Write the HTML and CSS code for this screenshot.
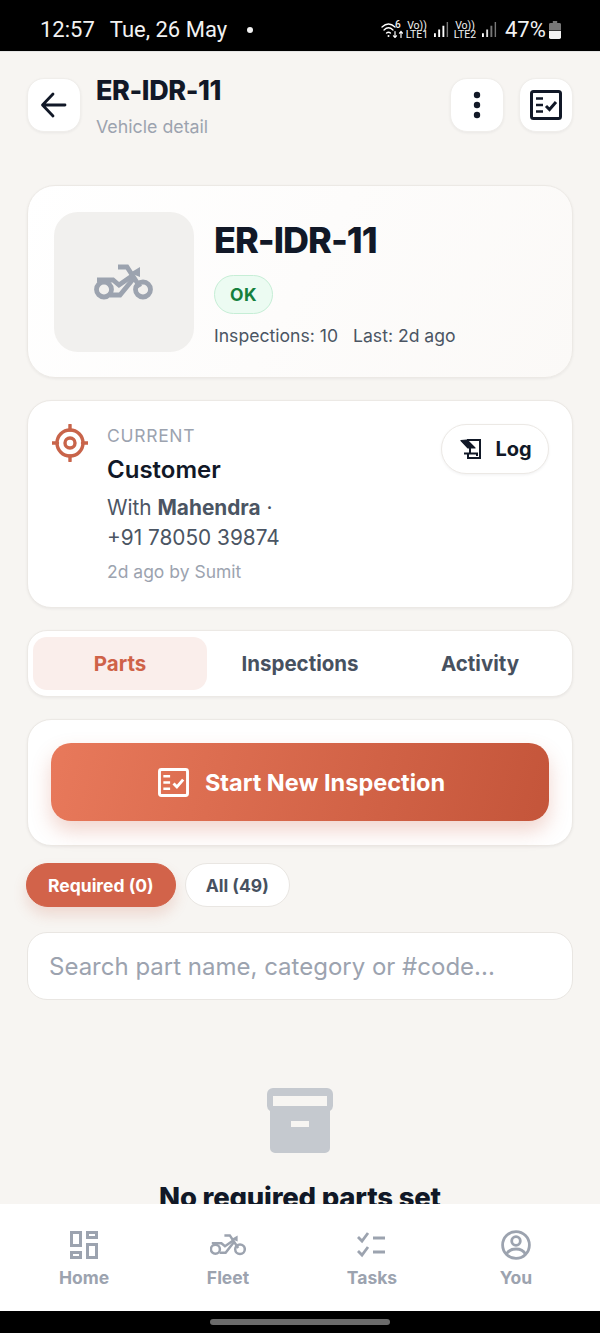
FILE: index.html
```html
<!DOCTYPE html>
<html lang="en">
<head>
<meta charset="utf-8">
<title>ER-IDR-11</title>
<link rel="stylesheet" href="styles.css">
</head>
<body>
<div class="phone">
  <div class="statusbar">
    <div class="status-left"><span class="clock">12:57</span><span class="date">Tue, 26 May</span><span class="dot"></span></div>
    <div class="status-right">
      <div class="wifi-box">
        <svg width="22" height="16" viewBox="0 0 22 16" fill="none" stroke="#fff" stroke-linecap="round">
          <path d="M1 5Q7.500 -1 14 5" stroke-width="1.300"/><path d="M3 8Q7.500 3.500 12 8" stroke-width="1.300"/><path d="M5.500 11Q7.500 9.500 9.500 11" stroke-width="1.300"/>
          <circle cx="7.500" cy="14" r="1" fill="#fff" stroke="none"/>
          <path d="M14 9.500v6M12.500 13.800l1.500 1.700 1.500-1.700M20 15.500v-6M18.500 11.200l1.500-1.700 1.500 1.700" stroke-width="1.200"/>
        </svg>
        <span class="wifi-six">6</span>
      </div>
      <div class="lte"><span>Vo))</span><span>LTE1</span></div>
      <svg class="signal" width="15" height="15" viewBox="0 0 16 16"><rect x="0" y="12" width="2" height="4" fill="#fff"/><rect x="4.500" y="8" width="2" height="8" fill="#fff"/><rect x="9" y="4" width="2" height="12" fill="#fff"/><rect x="13.500" y="0" width="1.500" height="16" fill="#777"/></svg>
      <div class="lte"><span>Vo))</span><span>LTE2</span></div>
      <svg class="signal" width="15" height="15" viewBox="0 0 16 16"><rect x="0" y="12" width="2" height="4" fill="#fff"/><rect x="4.500" y="8" width="2" height="8" fill="#ddd"/><rect x="9" y="4" width="2" height="12" fill="#777"/><rect x="13.500" y="0" width="1.500" height="16" fill="#777"/></svg>
      <span class="battery-text">47%</span>
      <svg width="12" height="18" viewBox="0 0 11 19" preserveAspectRatio="none"><path d="M3.500 0h4v2h2a1.500 1.500 0 0 1 1.500 1.500V10H0V3.500A1.500 1.500 0 0 1 1.500 2h2z" fill="#777"/><path d="M0 10.500h11v7A1.500 1.500 0 0 1 9.500 19h-8A1.500 1.500 0 0 1 0 17.500z" fill="#f2f2f2"/></svg>
    </div>
  </div>

  <main class="content">
    <header class="topbar">
      <button class="icon-btn">
        <svg width="30" height="30" viewBox="0 0 30 30" fill="none" stroke="#111827" stroke-width="2.800" stroke-linecap="round" stroke-linejoin="round"><path d="M26 15H4M14 4 3.500 15 14 26"/></svg>
      </button>
      <div class="topbar-titles">
        <div class="topbar-title">ER-IDR-11</div>
        <div class="topbar-sub">Vehicle detail</div>
      </div>
      <button class="icon-btn">
        <svg width="8" height="28" viewBox="0 0 8 28" fill="#111827"><circle cx="4" cy="4" r="3.200"/><circle cx="4" cy="14" r="3.200"/><circle cx="4" cy="24" r="3.200"/></svg>
      </button>
      <button class="icon-btn">
        <svg width="32" height="30" viewBox="0 0 32 30" fill="none" stroke="#111827" stroke-width="3"><rect x="1.500" y="1.500" width="29" height="27" rx="2"/><path d="M6 8.500h7M6 15h7M6 21.500h7" stroke-width="2.600"/><path d="M16 16l3.500 3.500L26 12" stroke-width="3"/></svg>
      </button>
    </header>

    <section class="card hero">
      <div class="thumb">
        <svg width="60" height="36" viewBox="0 0 60 36" fill="none" stroke="#9ca3af" stroke-width="4.800">
          <circle cx="10" cy="25.500" r="7.500"/><circle cx="49" cy="25.500" r="7.500"/>
          <path d="M3 16H19L25 21L38 12"/>
          <path d="M16 31H26L40 14"/>
          <path d="M24 3H33L46 23"/>
          <path d="M36 9L46 3V13z" fill="#9ca3af" stroke="none"/>
        </svg>
      </div>
      <div class="hero-info">
        <h1 class="hero-title">ER-IDR-11</h1>
        <span class="badge">OK</span>
        <div class="hero-meta"><span>Inspections: 10</span><span>Last: 2d ago</span></div>
      </div>
    </section>

    <section class="card current">
      <svg class="target" width="36" height="38" viewBox="0 0 36 38" fill="none" stroke="#c8644a">
        <circle cx="18" cy="19" r="13" stroke-width="3.400"/><circle cx="18" cy="19" r="5" stroke-width="3.400"/>
        <path d="M18 1v5M18 32v5M0.500 19h5M30.500 19h5" stroke-width="3.400" stroke-linecap="round"/>
      </svg>
      <div class="current-body">
        <div class="current-label">CURRENT</div>
        <div class="current-name">Customer</div>
        <div class="current-with">With <b>Mahendra</b> ·<br>+91 78050 39874</div>
        <div class="current-by">2d ago by Sumit</div>
      </div>
      <button class="log-btn">
        <svg width="21" height="20" viewBox="0 0 21 20" fill="none" stroke="#111827" stroke-width="2"><path d="M7 1H20V19H8V15"/><path d="M1 1.500L7 1L15 9H8z" fill="#111827" stroke-width="1.200" stroke-linejoin="round"/><path d="M10 9V14M4 14.500H17V17"/></svg>
        <span>Log</span>
      </button>
    </section>

    <nav class="card tabs">
      <span class="tab tab-active">Parts</span>
      <span class="tab">Inspections</span>
      <span class="tab">Activity</span>
    </nav>

    <section class="card start">
      <button class="start-btn">
        <svg width="31" height="29" viewBox="0 0 32 30" fill="none" stroke="#fff" stroke-width="3"><rect x="1.500" y="1.500" width="29" height="27" rx="2"/><path d="M5.500 8.500h7M5.500 15h7M5.500 21.500h7" stroke-width="2.600"/><path d="M16 16l3.500 3.500L26 12"/></svg>
        <span>Start New Inspection</span>
      </button>
    </section>

    <div class="chips">
      <span class="chip chip-active">Required (0)</span>
      <span class="chip">All (49)</span>
    </div>

    <div class="search">Search part name, category or #code...</div>

    <div class="empty">
      <svg width="66" height="66" viewBox="0 0 66 66"><path d="M6 0h54a6 6 0 0 1 6 6v12a6 6 0 0 1-3 5v37a5 5 0 0 1-5 5H8a5 5 0 0 1-5-5V23a6 6 0 0 1-3-5V6a6 6 0 0 1 6-6z" fill="#c5c9cf"/><rect x="6" y="8" width="54" height="10" fill="#f7f5f2"/><rect x="24" y="33" width="18" height="6" fill="#f7f5f2"/></svg>
      <div class="empty-title">No required parts set</div>
    </div>
  </main>

  <nav class="bottomnav">
    <div class="nav-item">
      <svg width="28" height="28" viewBox="0 0 28 28" fill="none" stroke="#9ca3af" stroke-width="3"><rect x="1.500" y="1.500" width="9" height="13"/><rect x="17.500" y="1.500" width="9" height="5"/><rect x="1.500" y="21.500" width="9" height="5"/><rect x="17.500" y="13.500" width="9" height="13"/></svg>
      <span>Home</span>
    </div>
    <div class="nav-item">
      <svg width="36" height="28" viewBox="0 0 60 36" fill="none" stroke="#9ca3af" stroke-width="4.200"><circle cx="9" cy="25" r="7.500"/><circle cx="50" cy="25" r="8"/><path d="M3 15H19L25 20L38 11"/><path d="M16 31H26L40 13"/><path d="M24 2H33L47 23"/><path d="M36 8L46 2V12z" fill="#9ca3af" stroke="none"/></svg>
      <span>Fleet</span>
    </div>
    <div class="nav-item">
      <svg width="30" height="28" viewBox="0 0 30 28" fill="none" stroke="#9ca3af" stroke-width="2.800"><path d="M1 6l4 4 6-8M1 20l4 4 6-8M16 7h12M16 21h12"/></svg>
      <span>Tasks</span>
    </div>
    <div class="nav-item">
      <svg width="30" height="30" viewBox="0 0 30 30" fill="none" stroke="#9ca3af" stroke-width="2.800"><circle cx="15" cy="15" r="13.400"/><circle cx="15" cy="11" r="4.300"/><path d="M5.500 24c2-3.500 5.500-5 9.500-5s7.500 1.500 9.500 5"/></svg>
      <span>You</span>
    </div>
  </nav>

  <div class="homebar"><span class="home-pill"></span></div>
</div>
</body>
</html>
```

FILE: styles.css
```css
* { box-sizing: border-box; }
html, body { margin: 0; padding: 0; }
body { font-family: Inter, "Liberation Sans", sans-serif; background: #f7f5f2; color: #111827; }
button { font-family: inherit; cursor: pointer; }

.phone { width: 600px; height: 1333px; display: flex; flex-direction: column; overflow: hidden; }

.statusbar { height: 52px; flex: none; background: #000; color: #f2f2f2; display: flex; justify-content: space-between; align-items: center; padding: 8px 39px 0 40px; border-bottom: 1px solid #e5e5e5; font-family: Roboto, sans-serif; }
.status-left { display: flex; align-items: center; font-size: 22px; }
.date { margin-left: 15px; }
.dot { width: 6px; height: 6px; margin-left: 20px; border-radius: 50%; background: #f2f2f2; }
.status-right { display: flex; align-items: center; }
.wifi-box { position: relative; width: 22px; height: 16px; }
.wifi-six { position: absolute; left: 14px; top: -2px; font-size: 10px; line-height: 10px; font-weight: 500; }
.lte { display: flex; flex-direction: column; align-items: center; width: 22px; margin-left: 3px; font-size: 10.500px; white-space: nowrap; }
.lte span { display: block; height: 9px; line-height: 9px; overflow: visible; }
.signal { margin: 0 0 0 6px; }
.signal + .lte { margin-left: 5px; }
.battery-text { margin: 0 4px 0 8px; width: 40px; font-size: 22px; white-space: nowrap; }

.content { flex: 1; min-height: 0; overflow: hidden; display: flex; flex-direction: column; padding: 26px 27px 0; }

.topbar { display: flex; align-items: flex-start; gap: 15px; height: 54px; flex: none; }
.icon-btn { width: 54px; height: 54px; flex: none; padding: 0; border: 1px solid #f0eeeb; border-radius: 17px; background: #fff; display: flex; align-items: center; justify-content: center; box-shadow: 0 1px 3px rgba(17,24,39,.06); }
.topbar-titles { flex: 1; }
.topbar-title { font-size: 27px; line-height: 28px; font-weight: 800; margin-top: -1px; letter-spacing: -.4px; }
.topbar-sub { font-size: 17.800px; line-height: 22px; margin-top: 11px; color: #9ca3af; }

.card { background: #fff; border: 1px solid #ece9e5; box-shadow: 0 1px 3px rgba(17,24,39,.06); flex: none; }

.hero { margin-top: 53px; height: 193px; border-radius: 28px; background: linear-gradient(120deg, #fff, #fbf9f7); padding: 26px; display: flex; gap: 20px; }
.thumb { width: 140px; height: 140px; flex: none; border-radius: 24px; background: #f1f0ee; display: flex; align-items: center; justify-content: center; }
.hero-info { display: flex; flex-direction: column; align-items: flex-start; }
.hero-title { margin: 6px 0 0; font-size: 36px; line-height: 44px; font-weight: 800; letter-spacing: -1px; }
.badge { margin-top: 13px; width: 59px; height: 39px; border-radius: 20px; background: #ecfbf2; border: 1px solid #c6eed6; color: #15803d; font-size: 17.500px; font-weight: 700; display: flex; align-items: center; justify-content: center; letter-spacing: .4px; }
.hero-meta { margin-top: 10px; display: flex; gap: 15px; font-size: 17.600px; line-height: 24px; color: #4b5563; }

.current { margin-top: 22px; height: 208px; border-radius: 24px; padding: 23px 23px 0 24px; display: flex; align-items: flex-start; }
.target { flex: none; margin-right: 19px; }
.current-body { flex: 1; padding-top: 1px; }
.current-label { font-size: 17.500px; line-height: 22px; letter-spacing: .7px; color: #9ca3af; }
.current-name { margin-top: 8px; font-size: 24px; line-height: 30px; font-weight: 600; }
.current-with { margin-top: 8px; font-size: 20.800px; line-height: 30px; color: #4b5563; }
.current-with b { font-weight: 700; }
.current-by { margin-top: 8px; font-size: 17.500px; line-height: 22px; color: #9ca3af; }
.log-btn { flex: none; width: 108px; height: 50px; padding: 0 0 0 2px; border: 1px solid #ece9e5; border-radius: 25px; background: #fff; display: flex; align-items: center; justify-content: center; gap: 14px; font-size: 20px; font-weight: 700; color: #111827; box-shadow: 0 1px 3px rgba(17,24,39,.06); }

.tabs { margin-top: 22px; height: 67px; border-radius: 20px; padding: 6px 5px; display: grid; grid-template-columns: repeat(3, 1fr); gap: 6px; }
.tab { display: flex; align-items: center; justify-content: center; border-radius: 14px; font-size: 20.500px; font-weight: 700; color: #475160; }
.tab-active { background: #faeeeb; color: #cf6248; }

.start { margin-top: 22px; height: 127px; border-radius: 24px; padding: 23px; }
.start-btn { width: 100%; height: 78px; padding: 0 0 0 3px; border: 0; border-radius: 20px; background: linear-gradient(105deg, #e8795b, #c4553a); color: #fff; display: flex; align-items: center; justify-content: center; gap: 16px; font-size: 23.500px; font-weight: 700; box-shadow: 0 10px 20px rgba(201,88,60,.25); }

.chips { margin: 17px 0 0 -1px; display: flex; gap: 9px; height: 44px; flex: none; }
.chip { display: flex; align-items: center; padding: 0 20px; height: 44px; border-radius: 22px; background: #fff; border: 1px solid #e9e6e2; font-size: 17.500px; font-weight: 700; color: #475160; }
.chip-active { padding: 0 21px; background: #d2634a; border-color: #d2634a; color: #fff; box-shadow: 0 8px 14px rgba(201,88,60,.18); }

.search { margin-top: 25px; height: 68px; flex: none; border-radius: 20px; background: #fff; border: 1px solid #e9e6e2; padding: 0 21px; display: flex; align-items: center; font-size: 24px; color: #9ca3af; }

.empty { margin-top: 88px; display: flex; flex-direction: column; align-items: center; flex: none; }
.empty-title { margin-top: 26px; font-size: 27.500px; line-height: 34px; font-weight: 800; letter-spacing: -.2px; }

.bottomnav { height: 107px; flex: none; background: #fff; padding: 0 12px; display: grid; grid-template-columns: repeat(4, 1fr); }
.nav-item { display: flex; flex-direction: column; align-items: center; justify-content: flex-start; padding-top: 26px; color: #9ca3af; font-size: 17.500px; font-weight: 700; }
.nav-item svg { height: 30px; }
.nav-item span { margin-top: 6px; line-height: 24px; }

.homebar { height: 22px; flex: none; background: #000; display: flex; align-items: center; justify-content: center; }
.home-pill { width: 180px; height: 6px; border-radius: 3px; background: #6b6b6b; }
```
